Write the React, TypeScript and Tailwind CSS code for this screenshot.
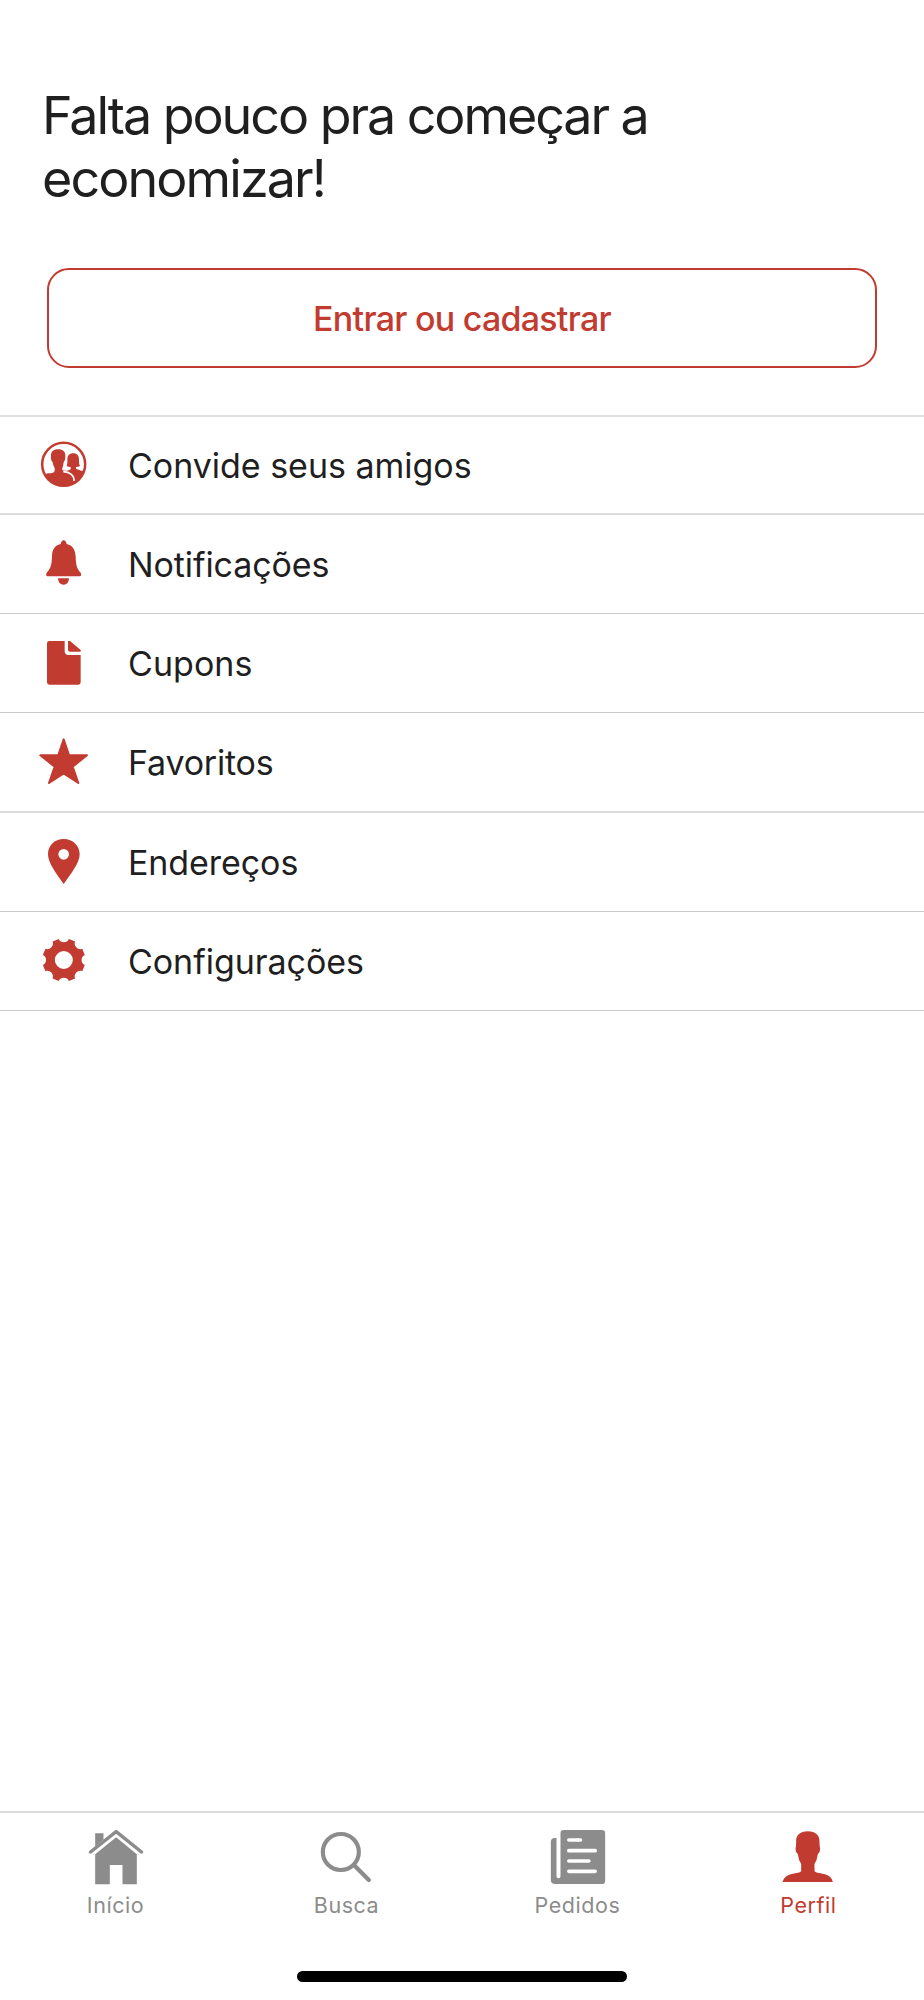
import type { ReactNode } from 'react'

type MenuItem = {
  label: string
  viewBox: string
  row: string
  text: string
  icon: ReactNode
}

const menu: MenuItem[] = [
  {
    label: 'Convide seus amigos',
    viewBox: '57 90 150 150',
    row: 'h-[98px] border-b-2 border-[#dcdcdc]',
    text: 'tracking-[-0.02px]',
    icon: (
      <>
        <clipPath id="friends">
          <circle cx="131" cy="163" r="66" />
        </clipPath>
        <g clipPath="url(#friends)">
          <path d="M114 118C99 118 92 126 93 140C92 147 94 153 98 157C99 164 101 169 104 174V183C102 189 94 190 84 190C76 192 70 194 60 198V240H205V184C195 183 181 183 177 179Q170 178 168 176V171Q175 171 180 168Q176 162 177 148C177 137 171 130 160 130C148 130 142 137 142 148Q143 162 140 168Q145 171 152 171V178Q149 180 141 182C133 183 129 182 127 180V174Q130 168 131 157Q136 152 136 140C137 126 130 118 114 118Z" />
          <path d="M130 185C150 186 163 196 162 213" fill="none" stroke="#fff" strokeWidth="5" />
        </g>
        <circle cx="131" cy="163" r="64.5" fill="none" stroke="currentColor" strokeWidth="7.5" />
      </>
    ),
  },
  {
    label: 'Notificações',
    viewBox: '57 387 150 150',
    row: 'h-[99px] border-b border-[#cbcbcb]',
    text: 'tracking-[-0.1px]',
    icon: (
      <>
        <path d="M131 391C136 391 138 395 140 402C158 406 166 420 167 440C168 465 170 475 182 488Q186 497 179 499H83Q76 497 80 488C92 475 95 465 96 440C96 420 104 406 122 402C124 395 126 391 131 391Z" />
        <path d="M114 505H147C146 518 140 524 131 524C121 524 115 518 114 505Z" />
      </>
    ),
  },
  {
    label: 'Cupons',
    viewBox: '57 84 150 150',
    row: 'h-[99px] border-b border-[#cbcbcb]',
    text: 'tracking-[0.05px]',
    icon: (
      <>
        <path d="M88 93H134V124Q134 135 146 135H182V217Q182 224 175 224H88Q81 224 81 217V100Q81 93 88 93Z" />
        <path d="M144 93H150L182 120V125H150Q144 125 144 119Z" />
      </>
    ),
  },
  {
    label: 'Favoritos',
    viewBox: '57 381 150 150',
    row: 'h-[100px] border-b-2 border-[#dcdcdc]',
    text: 'tracking-[-0.2px]',
    icon: (
      <path
        d="M131 388L147 435L201 436L158 470L175 519L131 490L87 519L104 470L61 436L115 435Z"
        stroke="currentColor"
        strokeWidth="6"
        strokeLinejoin="round"
      />
    ),
  },
  {
    label: 'Endereços',
    viewBox: '57 111 150 150',
    row: 'h-[99px] border-b border-[#cbcbcb]',
    text: 'tracking-[-0.08px]',
    icon: (
      <path
        fillRule="evenodd"
        d="M131 117C103 117 84 137 84 163C84 190 112 225 131 252C150 225 179 190 179 163C179 137 159 117 131 117ZM131 147A16 16 0 1 1 131 179A16 16 0 1 1 131 147Z"
      />
    ),
  },
  {
    label: 'Configurações',
    viewBox: '-74.5 -72 150 150',
    row: 'h-[99px] border-b border-[#cbcbcb]',
    text: 'tracking-[-0.05px]',
    icon: (
      <path
        fillRule="evenodd"
        d="M-15 -63C-11 -50 11 -50 15 -63L33.9 -55.2C27.6 -43.1 43.1 -27.6 55.2 -33.9L63 -15C50 -11 50 11 63 15L55.2 33.9C43.1 27.6 27.6 43.1 33.9 55.2L15 63C11 50 -11 50 -15 63L-33.9 55.2C-27.6 43.1 -43.1 27.6 -55.2 33.9L-63 15C-50 11 -50 -11 -63 -15L-55.2 -33.9C-43.1 -27.6 -27.6 -43.1 -33.9 -55.2ZM0 -27A27 27 0 1 0 0 27A27 27 0 1 0 0 -27Z"
      />
    ),
  },
]

const tabs = [
  {
    label: 'Início',
    viewBox: '54.5 87 168 168',
    color: 'text-[#8c8c8c]',
    icon: (
      <>
        <path d="M76 253V163L139 112L201 163V253H158V195H120V253Z" />
        <path d="M76 100H101V119L76 139Z" />
        <path d="M62 156L139 95L215 156" fill="none" stroke="currentColor" strokeWidth="10.5" strokeLinecap="round" strokeLinejoin="round" />
      </>
    ),
  },
  {
    label: 'Busca',
    viewBox: '57.5 87 168 168',
    color: 'text-[#8c8c8c]',
    icon: (
      <g fill="none" stroke="currentColor" strokeLinecap="round">
        <circle cx="123" cy="156" r="54" strokeWidth="12.5" />
        <path d="M163 196L207 240" strokeWidth="13" />
      </g>
    ),
  },
  {
    label: 'Pedidos',
    viewBox: '90.5 87 168 168',
    color: 'text-[#8c8c8c]',
    icon: (
      <>
        <path d="M132 90H246Q256 90 256 100V242Q256 252 246 252H106Q93 252 93 240V126Q93 114 105 114H110V229Q110 235 116 235Q122 235 122 229V100Q122 90 132 90Z" />
        <path d="M147 120H182M147 152H226M147 183H207M147 214H226" stroke="#fff" strokeWidth="11" strokeLinecap="round" />
      </>
    ),
  },
  {
    label: 'Perfil',
    viewBox: '63.5 87 168 168',
    color: 'text-[#c23b30]',
    icon: (
      <path d="M144 94C120 94 107 106 109 127Q109 140 107 146Q107 156 114 163Q116 180 124 192V213C122 218 110 219 95 222Q72 228 68 246H219Q216 228 193 222C178 219 166 218 164 213V192Q172 180 174 163Q181 156 181 146Q179 140 179 127C180 106 168 94 144 94Z" />
    ),
  },
]

function MenuRow({ item }: { item: MenuItem }) {
  return (
    <li className={`flex items-center gap-[39px] pl-[39px] ${item.row}`}>
      <svg viewBox={item.viewBox} className="size-[50px] text-[#c23b30]" fill="currentColor">
        {item.icon}
      </svg>
      <span className={`text-[34px] leading-[42px] pt-px ${item.text}`}>{item.label}</span>
    </li>
  )
}

export default function App() {
  return (
    <div className="flex flex-col w-[924px] h-[2000px] bg-white text-[#1f1f1f] font-[Inter,sans-serif]">
      <header className="px-[47px] pt-[84px]">
        <h1 className="-ml-[5px] text-[52px] leading-[63px] tracking-[-2.06px]">
          Falta pouco pra começar a<br />
          <span className="tracking-[-1.9px]">economizar!</span>
        </h1>
        <button className="mt-[58px] block h-[100px] w-full rounded-[22px] border-2 border-[#c23b30] pt-px text-[34px] font-[550] tracking-[-0.75px] text-[#c23b30]">
          Entrar ou cadastrar
        </button>
      </header>

      <ul className="mt-[47px] border-t-2 border-[#e2e2e2]">
        {menu.map((item) => (
          <MenuRow key={item.label} item={item} />
        ))}
      </ul>

      {/* Barra de abas */}
      <nav className="mt-auto h-[189px] border-t-2 border-[#dcdcdc]">
        <div className="grid grid-cols-4 pt-4">
          {tabs.map((tab) => (
            <a key={tab.label} className={`flex flex-col items-center gap-1.5 ${tab.color}`}>
              <svg viewBox={tab.viewBox} className="size-14" fill="currentColor">
                {tab.icon}
              </svg>
              <span className="text-[21.5px] leading-7 tracking-[0.55px]">{tab.label}</span>
            </a>
          ))}
        </div>
        <div className="mx-auto mt-[52px] h-[11px] w-[330px] rounded-full bg-black" />
      </nav>
    </div>
  )
}
